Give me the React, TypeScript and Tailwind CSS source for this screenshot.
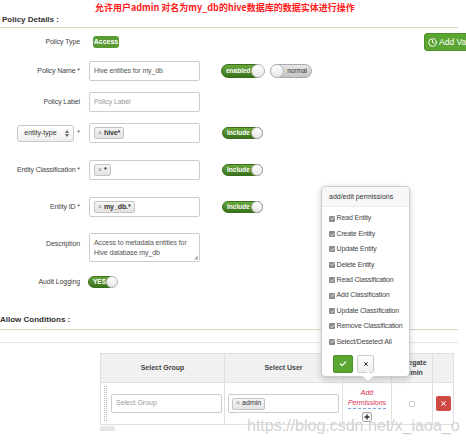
import React from 'react';
import { Check, X, Clock } from 'lucide-react';

const Label: React.FC<{ children: React.ReactNode }> = ({ children }) => (
  <div className="w-[80px] shrink-0 whitespace-nowrap text-right text-[7px] tracking-[-0.1px] text-[#444]">{children}</div>
);

const Box: React.FC<{ children?: React.ReactNode }> = ({ children }) => (
  <div className="ml-[9px] flex h-[20px] w-[111px] shrink-0 items-center rounded-[2px] border border-[#ccc] bg-white px-[4px] text-[7px] tracking-[-0.1px] text-[#555]">
    {children}
  </div>
);

const Chip: React.FC<{ text: string; bold?: boolean }> = ({ text, bold = true }) => (
  <span className="inline-flex h-[12px] items-center rounded-[2px] border border-[#c4c4c4] bg-linear-to-b from-[#f6f6f6] to-[#e3e3e3] px-[3px] text-[7px] text-[#333]">
    <span className="mr-[2px] text-[#888]">×</span>
    <span className={bold ? 'font-bold' : ''}>{text}</span>
  </span>
);

const OnToggle: React.FC<{ label: string; size: string }> = ({ label, size }) => (
  <div className={`flex shrink-0 items-center justify-between rounded-full border border-[#3a6e1d] bg-linear-to-b from-[#68a83c] to-[#3a721c] ${size}`}>
    <span className="pl-[4px] text-[6.5px] font-bold leading-none text-white">{label}</span>
    <span className="aspect-square h-[calc(100%+2px)] -mr-px rounded-full border border-[#b5b5b5] bg-linear-to-b from-white to-[#e6e6e6]" />
  </div>
);

const perms = [
  'Read Entity',
  'Create Entity',
  'Update Entity',
  'Delete Entity',
  'Read Classification',
  'Add Classification',
  'Update Classification',
  'Remove Classification',
  'Select/Deselect All',
];

export default function App() {
  return (
    <div className="relative h-[444px] w-[466px] overflow-hidden bg-white font-['Liberation_Sans',Arial,sans-serif] text-[#333]">
      {/* header */}
      <div className="h-[28px] w-[458px] border-b border-[#cfdcc2] pl-[2px] pt-[14px] text-[8px] font-bold text-[#333]">
        Policy Details :
      </div>

      {/* Policy Type */}
      <div className="mt-[5px] flex h-[18px] items-center">
        <Label>Policy Type</Label>
        <span className="ml-[13px] w-[26px] shrink-0 rounded-[3px] bg-[#5a9b33] py-[1px] text-center text-[7px] font-bold text-white">
          Access
        </span>
        <button className="ml-[305px] flex h-[18px] shrink-0 items-center gap-[2px] whitespace-nowrap rounded-[3px] border border-[#4b8e2a] bg-[#5ba633] px-[3px] text-[8.5px] text-white">
          <Clock size={9} strokeWidth={2.5} />
          Add Validity Period
        </button>
      </div>

      {/* Policy Name */}
      <div className="mt-[10px] flex h-[20px] items-center">
        <Label>Policy Name *</Label>
        <Box>Hive entities for my_db</Box>
        <div className="ml-[21px]">
          <OnToggle label="enabled" size="h-[14px] w-[42px]" />
        </div>
        <div className="ml-[7px] flex h-[14px] w-[42px] shrink-0 items-center justify-between rounded-full border border-[#aaa] bg-linear-to-b from-[#e8e8e8] to-[#c4c4c4]">
          <span className="aspect-square h-[calc(100%+2px)] -ml-px rounded-full border border-[#b5b5b5] bg-linear-to-b from-white to-[#e6e6e6]" />
          <span className="pr-[4px] text-[6.5px] leading-none text-[#333]">normal</span>
        </div>
      </div>

      {/* Policy Label */}
      <div className="mt-[11px] flex h-[20px] items-center">
        <Label>Policy Label</Label>
        <Box>
          <span className="text-[#999]">Policy Label</span>
        </Box>
      </div>

      {/* entity-type */}
      <div className="mt-[11px] flex h-[20px] items-center">
        <div className="flex w-[80px] shrink-0 items-center justify-end text-[7px] text-[#444]">
          <div className="flex h-[17px] w-[57px] items-center justify-between rounded-[3px] border border-[#c8c8c8] bg-linear-to-b from-white to-[#eee] pl-[6px] pr-[4px] text-[7px] text-[#333]">
            <span>entity-type</span>
            <svg width="4" height="7" viewBox="0 0 4 7" className="shrink-0">
              <path d="M0 3L2 0L4 3Z M0 4L2 7L4 4Z" fill="#666" />
            </svg>
          </div>
          <span className="ml-[3px]">*</span>
        </div>
        <Box>
          <Chip text="hive*" />
        </Box>
        <div className="ml-[22px]">
          <OnToggle label="Include" size="h-[12px] w-[41px]" />
        </div>
      </div>

      {/* Entity Classification */}
      <div className="mt-[17px] flex h-[20px] items-center">
        <Label>Entity Classification *</Label>
        <Box>
          <Chip text="*" />
        </Box>
        <div className="ml-[22px]">
          <OnToggle label="Include" size="h-[12px] w-[41px]" />
        </div>
      </div>

      {/* Entity ID */}
      <div className="mt-[17px] flex h-[20px] items-center">
        <Label>Entity ID *</Label>
        <Box>
          <Chip text="my_db.*" />
        </Box>
        <div className="ml-[22px]">
          <OnToggle label="Include" size="h-[12px] w-[41px]" />
        </div>
      </div>

      {/* Description */}
      <div className="mt-[16px] flex items-start">
        <div className="pt-[6px]">
          <Label>Description</Label>
        </div>
        <div className="relative ml-[9px] h-[29px] w-[111px] shrink-0 rounded-[2px] border border-[#ccc] bg-white px-[4px] pt-[4px] text-[7px] leading-[10px] tracking-[-0.1px] text-[#555]">
          Access to metadata entities for
          <br />
          Hive database my_db
          <span className="absolute bottom-[1px] right-[1px] text-[5px] leading-none text-[#aaa]">◢</span>
        </div>
      </div>

      {/* Audit Logging */}
      <div className="mt-[14px] flex h-[12px] items-center">
        <Label>Audit Logging</Label>
        <div className="ml-[8px]">
          <OnToggle label="YES" size="h-[12px] w-[27px]" />
        </div>
      </div>

      {/* Allow Conditions */}
      <div className="mt-[27px] w-[458px] border-b border-[#cfdcc2] pb-[4px] text-[8px] font-bold leading-[10px] text-[#333]">
        Allow Conditions :
      </div>
      <div className="mt-[12px] w-[458px] border-t border-[#e6e6e6]" />

      <table className="ml-[100px] mt-[10px] w-[353px] table-fixed border-collapse text-[7px]">
        <colgroup>
          <col className="w-[124px]" />
          <col className="w-[118px]" />
          <col className="w-[49px]" />
          <col className="w-[41px]" />
          <col className="w-[21px]" />
        </colgroup>
        <thead>
          <tr className="h-[29px] bg-[#f1f1f1]">
            <th className="border border-[#e0e0e0] font-bold text-[#444]">Select Group</th>
            <th className="border border-[#e0e0e0] font-bold text-[#444]">Select User</th>
            <th className="border border-[#e0e0e0] font-bold text-[#444]">Permissions</th>
            <th className="border border-[#e0e0e0] font-bold leading-[10px] text-[#444]">
              Delegate
              <br />
              Admin
            </th>
            <th className="border border-[#e0e0e0]" />
          </tr>
        </thead>
        <tbody>
          <tr className="h-[42px]">
            <td className="border border-[#e0e0e0] p-0">
              <div className="flex items-center">
                <div className="ml-[3px] h-[35px] w-[3px] border-x border-dotted border-[#bbb]" />
                <div className="ml-[4px] flex h-[19px] w-[111px] items-center rounded-[2px] border border-[#ccc] px-[4px] text-[#999]">
                  Select Group
                </div>
              </div>
            </td>
            <td className="border border-[#e0e0e0] p-0">
              <div className="ml-[3px] flex h-[19px] w-[111px] items-center rounded-[2px] border border-[#ccc] px-[3px]">
                <Chip text="admin" bold={false} />
              </div>
            </td>
            <td className="border border-[#e0e0e0] p-0">
              <div className="flex flex-col items-center pt-[2px]">
                <span className="text-[7px] italic leading-[10px] text-[#d9304d]">Add</span>
                <span className="border-b border-dashed border-[#7aa7d6] text-[7px] italic leading-[10px] text-[#d9304d]">
                  Permissions
                </span>
                <span className="mt-[3px] flex h-[10px] w-[10px] items-center justify-center rounded-[2px] border border-[#aaa] bg-[#f6f6f6]">
                  <svg width="6" height="6" viewBox="0 0 6 6">
                    <path d="M3 0.5V5.5M0.5 3H5.5" stroke="#333" strokeWidth="1.4" />
                  </svg>
                </span>
              </div>
            </td>
            <td className="border border-[#e0e0e0] p-0">
              <div className="mx-auto h-[6px] w-[6px] rounded-[1px] border border-[#ccc]" />
            </td>
            <td className="border border-[#e0e0e0] p-0">
              <div className="mx-auto flex h-[15px] w-[15px] items-center justify-center rounded-[2px] bg-[#d04a43]">
                <X size={7} strokeWidth={3.5} color="white" />
              </div>
            </td>
          </tr>
        </tbody>
      </table>
      <div className="ml-[100px] mt-px h-[5px] w-[15px] rounded-t-[2px] bg-[#e6e6e6]" />

      {/* annotation */}
      <div className="absolute left-[95px] top-[2px] font-['Noto_Sans_CJK_SC',sans-serif] text-[9px] font-bold leading-[12px] text-[#ff1a1a]">
        允许用户admin 对名为my_db的hive数据库的数据实体进行操作
      </div>

      {/* permissions popover */}
      <div className="absolute left-[321px] top-[186px] w-[89px] rounded-[4px] border border-[#ccc] bg-white shadow-[0_2px_6px_rgba(0,0,0,0.2)]">
        <div className="h-[20px] whitespace-nowrap rounded-t-[4px] border-b border-[#ebebeb] bg-[#f7f7f7] pl-[7px] text-[7px] leading-[20px] text-[#333]">
          add/edit permissions
        </div>
        <div className="pl-[7px] pt-[4px]">
          {perms.map((p) => (
            <div key={p} className="flex h-[15.4px] items-center gap-[1.5px] whitespace-nowrap text-[7px] tracking-[-0.15px] text-[#444]">
              <span className="flex h-[6px] w-[6px] shrink-0 items-center justify-center rounded-[1px] bg-[#8a8a8a]">
                <Check size={5} strokeWidth={4} color="white" />
              </span>
              {p}
            </div>
          ))}
        </div>
        <div className="ml-[11px] mt-[5px] mb-[3px] flex gap-[4px]">
          <div className="flex h-[18px] w-[20px] items-center justify-center rounded-[2px] border border-[#4b8e2a] bg-[#5ba633]">
            <Check size={8} strokeWidth={3.5} color="white" />
          </div>
          <div className="flex h-[18px] w-[17px] items-center justify-center rounded-[2px] border border-[#ccc] bg-linear-to-b from-white to-[#eee]">
            <X size={6} strokeWidth={4} color="#333" />
          </div>
        </div>
        <div className="absolute bottom-[-5px] left-[42px] h-[8px] w-[8px] rotate-45 border-b border-r border-[#ccc] bg-white" />
      </div>

      {/* watermark */}
      <div className="absolute left-[247px] top-[416px] font-['Liberation_Sans',sans-serif] text-[16px] leading-[20px] text-[#d2d2d2]">
        https://blog.csdn.net/x_iaoa_o
      </div>
    </div>
  );
}
